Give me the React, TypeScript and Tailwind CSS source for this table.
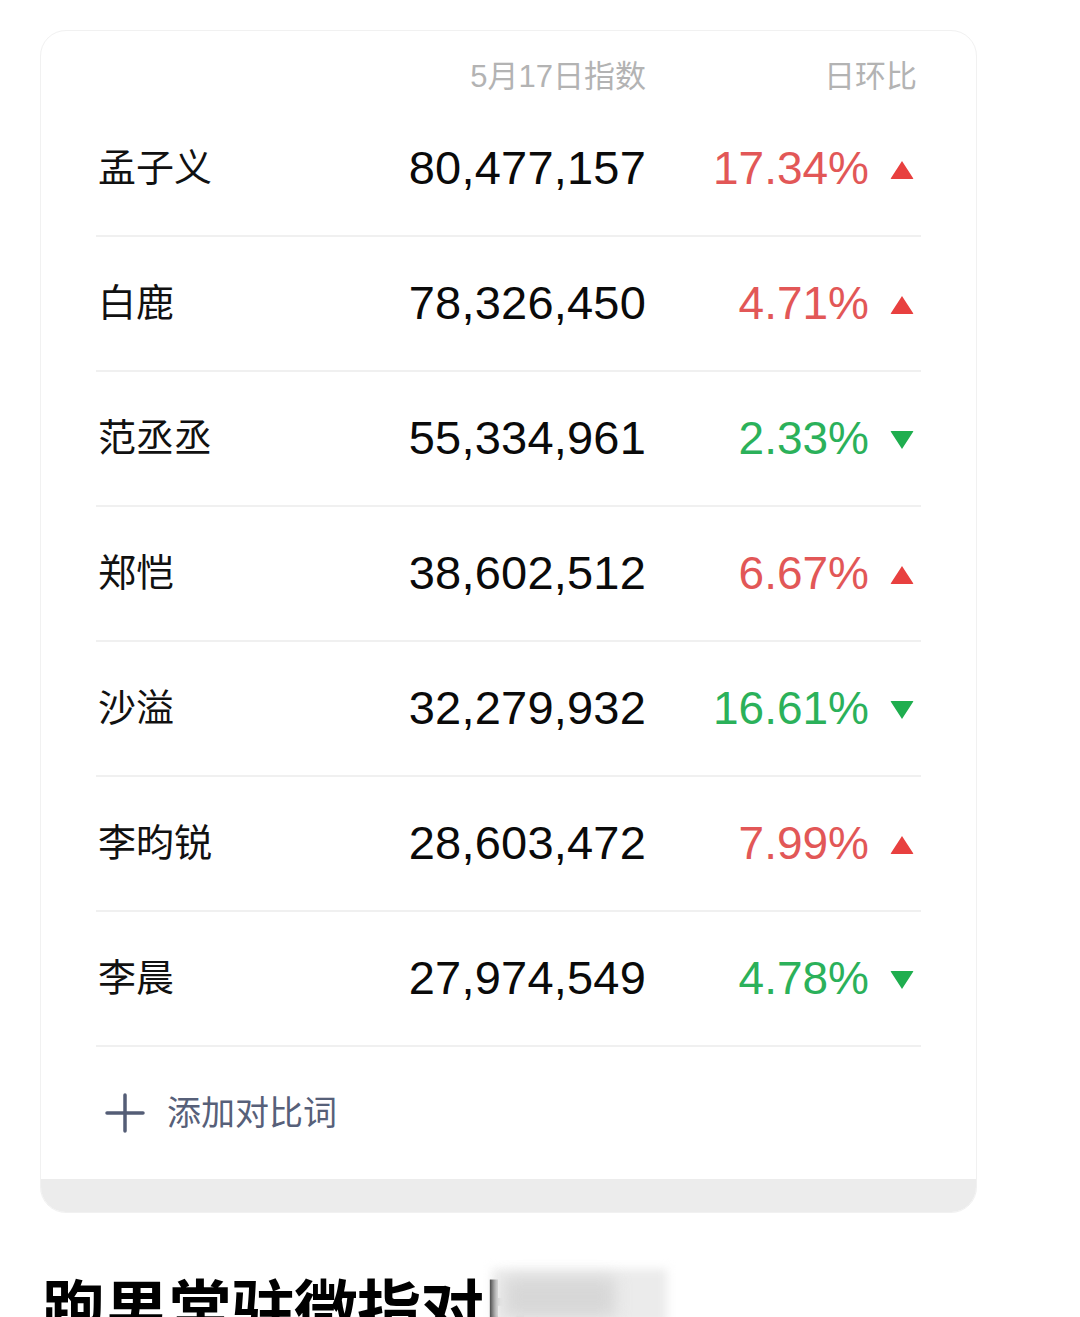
import React from 'react';

type Row = { name: string; value: string; pct: string; up: boolean };

const rows: Row[] = [
  { name: '孟子义', value: '80,477,157', pct: '17.34%', up: true },
  { name: '白鹿', value: '78,326,450', pct: '4.71%', up: true },
  { name: '范丞丞', value: '55,334,961', pct: '2.33%', up: false },
  { name: '郑恺', value: '38,602,512', pct: '6.67%', up: true },
  { name: '沙溢', value: '32,279,932', pct: '16.61%', up: false },
  { name: '李昀锐', value: '28,603,472', pct: '7.99%', up: true },
  { name: '李晨', value: '27,974,549', pct: '4.78%', up: false },
];

const font = "font-['Liberation_Sans','Noto_Sans_CJK_SC',sans-serif]";

const Triangle = ({ up }: { up: boolean }) => (
  <svg width="26" height="22" viewBox="0 0 26 22" className="shrink-0">
    {up ? (
      <path d="M13 2 L24 19 Q25 20 23.5 20 L2.5 20 Q1 20 2 19 Z" fill="#e8403f" />
    ) : (
      <path d="M13 20 L24 3 Q25 2 23.5 2 L2.5 2 Q1 2 2 3 Z" fill="#1fae4f" />
    )}
  </svg>
);

const App: React.FC = () => {
  return (
    <div className={`w-[1080px] h-[1317px] overflow-hidden bg-white ${font} relative`}>
      <div className="pt-[30px] pl-[40px]">
        <div className="w-[937px] rounded-[26px] border border-[#f1f1f1] bg-white overflow-hidden">
          <div className="pt-[21px] pl-[55px] pr-[55px]">
            <div className="h-[50px] flex items-center text-[31px] text-[#b3b3b3]">
              <div className="w-[550px] text-right">5月17日指数</div>
              <div className="flex-1 text-right pr-[4px]">日环比</div>
            </div>
            {rows.map((r) => (
              <div key={r.name} className="h-[135px] flex items-center border-b-2 border-[#f0f0f0]">
                <div className="w-[250px] pl-[2px] text-[38px] text-[#111]">{r.name}</div>
                <div className="w-[300px] text-right text-[47px] text-[#0a0a0a] tracking-[0.2px]">{r.value}</div>
                <div
                  className={`w-[223px] text-right text-[46px] ${r.up ? 'text-[#e25757]' : 'text-[#2bb15a]'}`}
                >
                  {r.pct}
                </div>
                <div className="flex-1 flex justify-end pr-[6px] pt-[2px]">
                  <Triangle up={r.up} />
                </div>
              </div>
            ))}
            <div className="h-[132px] flex items-center">
              <svg width="40" height="40" viewBox="0 0 40 40" className="ml-[9px]">
                <path d="M20 2 V38 M2 20 H38" stroke="#545d76" strokeWidth="3.5" strokeLinecap="round" />
              </svg>
              <span className="ml-[22px] text-[34px] text-[#576079]">添加对比词</span>
            </div>
          </div>
          <div className="h-[33px] bg-[#ececec]" />
        </div>
      </div>
      <div className="pl-[42px] pt-[66px] relative">
        <div className="text-[64px] font-bold text-black leading-none tracking-[-1px]">跑男常驻微指对比</div>
        <div className="absolute left-[492px] top-[56px] w-[175px] h-[56px] bg-[#ebebeb] blur-[5px]" />
        <div className="absolute left-[505px] top-[64px] w-[110px] h-[40px] bg-[#cfcfcf] blur-[8px] opacity-70" />
      </div>
    </div>
  );
};

export default App;
